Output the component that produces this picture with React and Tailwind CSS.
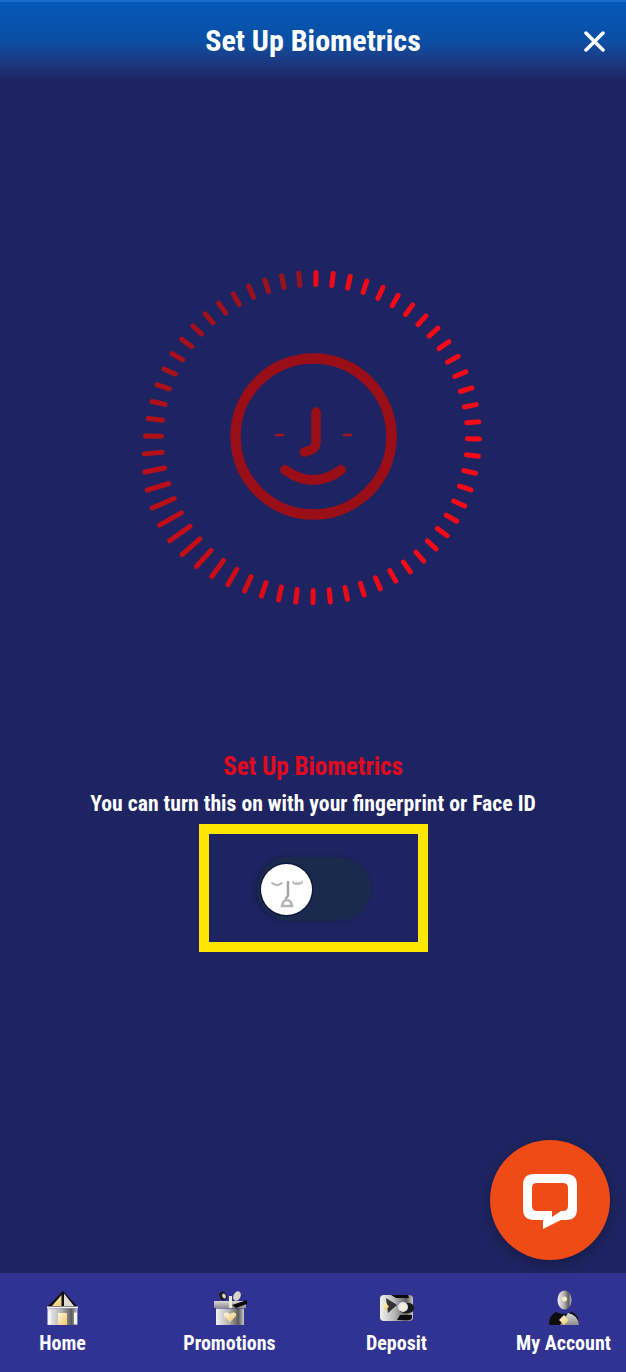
import React from "react";

const CX = 314.5, CY = 437.5;
function lerp(a, b, t) { return a + (b - a) * t; }
function tickColor(a) {
  const stops = [
    [0, [240, 10, 24]], [90, [246, 10, 24]], [180, [238, 10, 24]], [215, [200, 14, 24]],
    [270, [178, 16, 24]], [330, [158, 18, 28]], [358, [150, 20, 30]], [360, [240, 10, 24]],
  ];
  for (let i = 0; i < stops.length - 1; i++) {
    const [a0, c0] = stops[i], [a1, c1] = stops[i + 1];
    if (a >= a0 && a <= a1) {
      const t = (a - a0) / (a1 - a0);
      return `rgb(${c0.map((v, k) => Math.round(lerp(v, c1[k], t))).join(",")})`;
    }
  }
  return "rgb(240,10,24)";
}
const ticks = Array.from({ length: 60 }, (_, i) => {
  const a = (0.5 + i * 6) % 360;
  const rad = (a * Math.PI) / 180;
  const len = 12 + 13 * Math.exp(-Math.pow((a - 238) / 30, 2));
  const r0 = 153, r1 = r0 + len;
  return {
    a,
    x1: CX + r0 * Math.sin(rad), y1: CY - r0 * Math.cos(rad),
    x2: CX + r1 * Math.sin(rad), y2: CY - r1 * Math.cos(rad),
  };
});

function Dial() {
  return (
    <svg width="366" height="350" viewBox="130 260 366 350" className="mt-[178px] block shrink-0">
      {ticks.map((t) => (
        <line key={t.a} x1={t.x1} y1={t.y1} x2={t.x2} y2={t.y2} stroke={tickColor(t.a)} strokeWidth="5" strokeLinecap="round" />
      ))}
      <circle cx="313.500" cy="436.500" r="78" fill="none" stroke="#9a0e17" strokeWidth="10.500" />
      <path d="M316 412V441q0 8-8 10l-3.500 1" fill="none" stroke="#9a0e17" strokeWidth="9.500" strokeLinecap="round" strokeLinejoin="round" />
      <path d="M285 470q28 20 56 0" fill="none" stroke="#9a0e17" strokeWidth="10" strokeLinecap="round" />
      <path d="M275 435h9M343 435h9" stroke="#a3131e" strokeWidth="2.500" />
    </svg>
  );
}

function Defs() {
  return (
    <svg width="0" height="0" className="absolute">
      <defs>
        <linearGradient id="metal" x1="0" x2="1" y1="0" y2="0">
          <stop offset="0" stopColor="#f2f2f2" /><stop offset=".45" stopColor="#b5b5b5" /><stop offset=".8" stopColor="#5c5c5c" /><stop offset="1" stopColor="#c8c8c8" />
        </linearGradient>
        <linearGradient id="metalV" x1="0" x2="0" y1="0" y2="1">
          <stop offset="0" stopColor="#d9d9d9" /><stop offset="1" stopColor="#8e8e8e" />
        </linearGradient>
        <linearGradient id="gold" x1="0" x2="1" y1="0" y2="1">
          <stop offset="0" stopColor="#fff6df" /><stop offset="1" stopColor="#f0c566" />
        </linearGradient>
      </defs>
    </svg>
  );
}

function HomeIcon() {
  return (
    <svg width="36" height="36" viewBox="0 0 36 36">
      <path d="M18 1 33 17H2Z" fill="#111" />
      <path d="M16.500 5v11H7Z" fill="url(#gold)" />
      <path d="M19 3.500 29 16H19Z" fill="#dcdcd4" />
      <path d="M2 16.500h31v2H2Z" fill="#f5f5f5" />
      <path d="M2.500 18.500h30V35h-30Z" fill="url(#metal)" />
      <path d="M3 22.500h3V34H3ZM29 22.500h3V34h-3Z" fill="#f4f4f4" />
      <path d="M13 23h9v12h-9Z" fill="url(#gold)" />
    </svg>
  );
}
function PromoIcon() {
  return (
    <svg width="36" height="36" viewBox="0 0 36 36">
      <ellipse cx="11" cy="6" rx="3.500" ry="4.500" fill="#1a1a1a" transform="rotate(-25 11 6)" />
      <ellipse cx="12" cy="6" rx="1.800" ry="2.600" fill="#cfcfcf" transform="rotate(-25 12 6)" />
      <ellipse cx="25" cy="6" rx="3.500" ry="5" fill="#d8d5c8" transform="rotate(25 25 6)" />
      <path d="M2 11h32v7H2Z" fill="url(#metalV)" />
      <path d="M20 15 35 10v4l-11 4Z" fill="#0c0c0c" />
      <path d="M4 18.500h28V35H4Z" fill="url(#metal)" />
      <path d="M17 6h3v12h-3Z" fill="#efe7cf" />
      <path d="M18 32 12 26q-1-3.500 2.500-3.500 2.500 0 3.500 2 1-2 3.500-2 3.500 0 2.500 3.500Z" fill="url(#gold)" />
    </svg>
  );
}
function DepositIcon() {
  return (
    <svg width="36" height="36" viewBox="0 0 36 36">
      <rect x="1" y="5" width="33" height="26" rx="4" fill="url(#metal)" />
      <path d="M12 5h17l1 3H17ZM21 25h12v2a3 3 0 0 1-3 3H18Z" fill="#0c0c0c" />
      <path d="M7 8 18 15 9 23Z" fill="#222" opacity=".9" />
      <path d="M6 12l4 4.500-4 4.500-3-4.500Z" fill="url(#gold)" />
      <rect x="20" y="13" width="15" height="10" rx="5" fill="#1a1a1a" />
      <circle cx="24" cy="17" r="5" fill="#e8e8e8" />
      <circle cx="24" cy="17" r="2.500" fill="#faf0d7" />
    </svg>
  );
}
function AccountIcon() {
  return (
    <svg width="36" height="36" viewBox="0 0 36 36">
      <ellipse cx="18.500" cy="10" rx="7" ry="9.500" fill="url(#metal)" />
      <circle cx="18.500" cy="9" r="2.500" fill="#f7ecc9" />
      <path d="M3 35q0-10 7-13 8 4 16 0 7 3 7 13Z" fill="#0d0d0d" />
      <path d="M22 23q10 2 11 12H14Z" fill="url(#metalV)" />
      <path d="M18 25l5 5-5 5-5-5Z" fill="url(#gold)" />
    </svg>
  );
}

function FaceKnob() {
  return (
    <div className="h-[51px] w-[51px] rounded-full bg-white shadow-[0_0_0_1.500px_#11183c]">
      <svg width="51" height="51" viewBox="0 0 51 51">
        <path d="M11 19q5 4 10 0M32 18q1 3 3 1 1 2 3 0 1 2 3-1" fill="none" stroke="#b5b5b8" strokeWidth="1.800" strokeLinecap="round" />
        <path d="M27 18v13q0 2-2 3" fill="none" stroke="#a5a5a8" strokeWidth="2.500" strokeLinecap="round" />
        <path d="M21 42q1-6 5-6t5 6Z" fill="none" stroke="#b5b5b8" strokeWidth="2.500" />
      </svg>
    </div>
  );
}

function NavItem({ icon, label }) {
  return (
    <div className="flex w-[125px] flex-col items-center">
      {icon}
      <span className="mt-[5px] whitespace-nowrap text-[20px] leading-[24px] font-bold text-white [font-stretch:75%]">{label}</span>
    </div>
  );
}

export default function App() {
  return (
    <div className="relative flex h-[1372px] w-[626px] flex-col overflow-hidden bg-[#1e2461] font-['Roboto',sans-serif]">
      <Defs />
      <header className="grid h-[82px] shrink-0 grid-cols-[1fr_auto_1fr] items-start border-t-2 border-[#1a6bcb] bg-gradient-to-b from-[#0459b8] via-[#0a4ea3] to-[#1e2461] pt-[20px]">
        <div />
        <h1 className="text-[30px] leading-[38px] font-bold text-white [font-stretch:75%]">Set Up Biometrics</h1>
        <div className="flex justify-end pr-[21px] pt-[9px]">
          <svg width="22" height="22" viewBox="0 0 22 22">
            <path d="M3 2 20 19M20 2 3 19" stroke="#fff" strokeWidth="3.500" strokeLinecap="round" />
          </svg>
        </div>
      </header>

      <main className="flex flex-1 flex-col items-center">
        <Dial />
        <h2 className="mt-[142px] text-[25px] leading-[30px] font-bold text-[#e30a1e] [font-stretch:75%]">Set Up Biometrics</h2>
        <p className="mt-[7px] text-[21.700px] leading-[30px] font-bold text-white [font-stretch:75%]">You can turn this on with your fingerprint or Face ID</p>
        <div className="mt-[5px] flex h-[128px] w-[229px] items-center justify-center border-[10px] border-[#ffe600] pt-[2px] pl-[2px]">
          <div className="flex h-[64px] w-[114px] items-center rounded-full bg-[#192a4c] pl-[4px] shadow-[-2px_0_4px_#161d4f]">
            <FaceKnob />
          </div>
        </div>
      </main>

      <footer className="flex h-[99px] shrink-0 justify-between bg-[#303391] pt-[17px]">
        <NavItem icon={<HomeIcon />} label="Home" />
        <NavItem icon={<PromoIcon />} label="Promotions" />
        <NavItem icon={<DepositIcon />} label="Deposit" />
        <NavItem icon={<AccountIcon />} label="My Account" />
      </footer>

      <div className="absolute top-[1140px] left-[490px] flex h-[120px] w-[120px] items-center justify-center rounded-full bg-[#ef4b17] shadow-[0_4px_14px_rgba(0,0,0,0.25)]">
        <svg width="120" height="120" viewBox="0 0 120 120">
          <path fillRule="evenodd" fill="#fff" d="M44 34h32q11 0 11 11v24q0 11-11 11h-5L53 89V80h-9q-11 0-11-11V45q0-11 11-11ZM47 43q-5 0-5 5v18q0 5 5 5h15v6l9-6h2q5 0 5-5V48q0-5-5-5Z" />
        </svg>
      </div>
    </div>
  );
}
